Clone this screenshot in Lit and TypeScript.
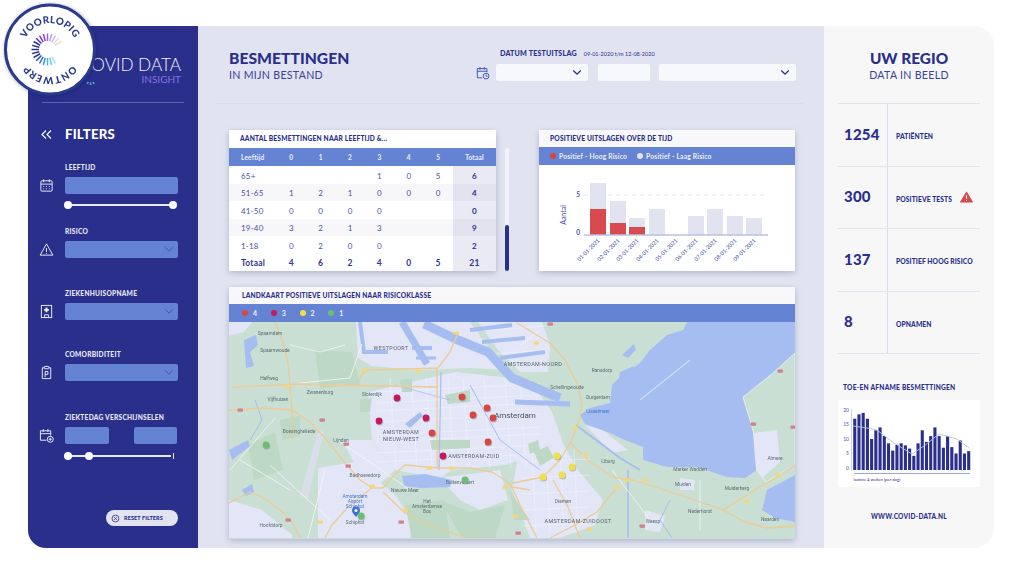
import { LitElement, css, html, svg } from 'lit';
import { customElement } from 'lit/decorators.js';

const ROWS = [
  ['65+', '', '', '', '1', '0', '5', '6'],
  ['51-65', '1', '2', '1', '0', '0', '0', '4'],
  ['41-50', '0', '0', '0', '0', '', '', '0'],
  ['19-40', '3', '2', '1', '3', '', '', '9'],
  ['1-18', '0', '2', '0', '0', '', '', '2'],
  ['Totaal', '4', '6', '2', '4', '0', '5', '21'],
];

// label, x, top of the grey bar, top of the red bar (page pixels)
const BARS: [string, number, number, number][] = [
  ['01-01-2021', 590, 183, 209],
  ['02-01-2021', 610, 201, 223],
  ['03-01-2021', 629, 218, 227],
  ['04-01-2021', 649, 209, 235],
  ['05-01-2021', 668, 235, 235],
  ['06-01-2021', 688, 216, 235],
  ['07-01-2021', 707, 209, 235],
  ['08-01-2021', 727, 216, 235],
  ['09-01-2021', 746, 218, 235],
];

const DAILY = [17, 18.5, 19, 17, 10, 13, 14, 11, 8.5, 6, 8, 8.5, 7.8, 6.7, 4.2, 8.5, 13, 9, 11, 14, 11, 7, 11, 7.2, 5, 9.5, 5, 5.8];
const TREND = '853,425 867,427 877,429 894,442 912,453 924,445 939,433 957,438 969,447';

const WATER_POLYS = [
  '687,322 795,322 795,353 772,374 743,397 750,420 757,445 757,470 745,478 727,477 697,467 667,467 643,460 643,447 625,440 610,433 585,424 580,415 590,408 610,403 612,385 620,377 640,363 650,350 667,335 683,330',
  '767,490 795,475 795,522 775,518 762,510',
  '402,476 425,474 452,480 450,487 420,488 404,486',
  '405,424 420,412 423,416 410,428',
  '244,340 256,335 258,345 250,352 254,366 246,368',
  '229,450 248,440 250,446 232,460',
  '242,490 252,484 254,492 246,496',
  '622,355 634,344 636,350 628,358',
  '620,372 634,366 630,380 618,384',
];

const WATER_LINES: [string, number][] = [
  ['360,322 364,352 388,352', 4],
  ['402,322 427,364', 7],
  ['412,348 432,348', 4],
  ['416,358 436,358', 3],
  ['424,324 458,340 488,352 512,378 560,398', 9],
  ['470,330 512,325', 4],
  ['482,342 525,338', 4],
  ['500,358 545,352', 4],
  ['515,402 570,404', 5],
  ['576,425 620,458 640,470', 2],
  ['628,470 628,538', 1.5],
  ['670,500 660,520 672,538', 1],
  ['441,372 439,470', 1.2],
  ['470,385 500,440 540,470', 1],
  ['395,385 450,400', 0.8],
  ['255,400 262,420 250,440', 1],
];

const URBAN_POLYS = [
  '356,322 470,322 490,350 508,370 470,368 420,370 372,366 358,358',
  '478,322 542,322 550,345 548,372 520,372 498,350',
  '368,392 455,372 530,380 552,412 562,440 545,452 505,465 452,470 440,478 395,470 372,440',
  '520,445 560,438 578,470 603,500 595,525 560,538 530,538 512,490',
  '318,468 355,462 395,495 412,520 410,538 318,538',
  '342,440 372,440 395,470 380,484 358,470',
  '229,500 262,510 292,535 292,538 229,538',
  '585,425 600,428 628,450 612,453',
  '680,478 695,480 694,490 680,490',
  '645,510 665,516 660,532 645,530',
  '440,478 500,470 508,500 480,510 460,500',
  '229,322 252,322 244,332 229,336',
];

const GREEN_POLYS = [
  '315,350 352,352 360,385 320,388',
  '405,505 445,500 450,538 412,538',
  '400,380 412,378 412,392 402,392',
  '534,452 548,446 554,458 540,466',
  '445,395 470,390 470,402 448,404',
  '430,440 470,440 470,448 432,450',
  '280,420 300,416 300,436 282,440',
  '510,490 516,500 530,520 514,520',
  '248,445 275,432 283,470 254,480',
  '528,444 538,440 540,450 530,454',
  '360,400 372,398 370,412 360,412',
  '440,500 470,512 505,505 495,538 462,538',
];

const ROADS = [
  '229,410 262,408 292,410 310,422 325,438 345,463 360,480 372,488 383,488 395,474 405,465 438,468 470,468 492,472 505,480 512,487 530,490',
  '232,387 300,384 380,386 438,387',
  '358,382 362,374 368,370 438,368 450,352 458,333',
  '437,368 437,468',
  '372,488 350,505 332,525 325,538',
  '383,492 405,513 430,525 465,538',
  '275,322 284,345 288,363 292,410 292,440',
  '513,483 543,477 560,460 570,443 578,425 582,405 578,385 565,360 550,343 517,323',
  '570,443 590,462 613,477 633,480 680,495 723,510 755,490 780,475 795,465',
  '723,510 745,522 767,528 795,526',
  '615,490 597,512 575,525 550,538',
  '553,480 568,507 580,538',
  '510,483 520,505 537,538',
  '229,503 250,492 262,497 280,510 292,522 300,538',
];

const STREETS = [
  '300,383 350,378 362,344',
  '230,470 275,418',
  '270,465 330,520',
  '338,440 410,490',
  '240,460 290,490',
  '520,345 540,330',
  '757,445 778,452',
  '290,345 320,352 345,345',
  '325,470 308,538',
  '640,400 690,360',
  '612,470 650,520',
  '700,480 700,530',
];

// a loose street grid for the built-up parts
const CITY_GRID: string[] = [
  ...[388, 399, 407, 418, 431, 438, 449, 458].map((y) => `376,${y + 4} 540,${y - 4}`),
  ...[390, 411, 426, 448, 463, 484, 505, 520].map((x) => `${x},378 ${x + 6},468`),
  ...[462, 478, 494, 510, 526].map((y) => `522,${y} 590,${y - 3}`),
  ...[532, 546, 560, 574].map((x) => `${x},450 ${x + 4},532`),
  ...[330, 342, 354].map((y) => `492,${y} 546,${y - 4}`),
];

const SHIELDS: [number, number, boolean][] = [
  [456, 333, false], [364, 370, false], [418, 371, false], [287, 386, false],
  [240, 410, true], [322, 420, true], [346, 444, true], [348, 466, true],
  [372, 486, false], [405, 510, false], [401, 522, true], [320, 522, false],
  [288, 520, true], [429, 468, false], [451, 468, false], [505, 487, false],
  [536, 343, false], [550, 324, true], [575, 428, false], [585, 455, false],
  [617, 487, false], [627, 480, false], [645, 480, false], [746, 501, false],
  [778, 475, false], [780, 371, true], [753, 424, true], [793, 427, true],
  [589, 529, false], [515, 516, false], [518, 533, true], [642, 526, true],
];

const LABELS: [number, number, string, string?][] = [
  [391, 350, 'WESTPOORT', 'l-area'],
  [270, 335, 'Spaarndam'],
  [275, 352, 'Spaarnwoude'],
  [269, 380, 'Halfweg'],
  [320, 394, 'Zwanenburg'],
  [278, 401, 'Vijfhuizen'],
  [372, 396, 'Sloterdijk'],
  [401, 434, 'AMSTERDAM', 'l-area'],
  [401, 441, 'NIEUW-WEST', 'l-area'],
  [474, 458, 'AMSTERDAM-ZUID', 'l-area'],
  [341, 442, 'Lijnden'],
  [299, 433, 'Boesingheliede'],
  [365, 477, 'Badhoevedorp'],
  [355, 498, 'Amsterdam', 'l-blue'],
  [355, 503, 'Airport', 'l-blue'],
  [355, 508, 'Schiphol', 'l-blue'],
  [355, 524, 'Schiphol'],
  [271, 527, 'Hoofddorp'],
  [405, 492, 'Nieuwe Meer'],
  [460, 484, 'Buitenveldert'],
  [427, 503, 'Het'],
  [427, 508, 'Amsterdamse'],
  [427, 513, 'Bos'],
  [533, 366, 'AMSTERDAM-NOORD', 'l-area'],
  [602, 372, 'Ransdorp'],
  [567, 389, 'Schellingwoude'],
  [598, 399, 'Durgerdam'],
  [598, 413, 'IJsselmeer', 'l-blue'],
  [515, 418, 'Amsterdam', 'l-city'],
  [563, 503, 'Diemen'],
  [578, 523, 'AMSTERDAM-ZUIDOOST', 'l-area'],
  [683, 486, 'Muiden'],
  [737, 490, 'Muiderberg'],
  [653, 523, 'Weesp'],
  [690, 471, 'Marker Wadden'],
  [608, 463, 'IJburg'],
  [775, 460, 'Almere'],
  [700, 513, 'Nederhorst'],
  [770, 521, 'Naarden'],
];

const MARKERS: [number, number, string][] = [
  [397, 398, 'm3'], [462, 397, 'm4'], [487, 408, 'm4'], [379, 421, 'm3'], [426, 418, 'm3'],
  [473, 415, 'm4'], [493, 418, 'm4'], [432, 433, 'm4'], [488, 442, 'm4'], [443, 456, 'm3'],
  [465, 480, 'm1'], [266, 445, 'm1'], [361, 516, 'm1'], [557, 456, 'm2'], [572, 467, 'm2'],
  [562, 475, 'm2'], [543, 477, 'm2'],
];

// clockwise from just right of the top
const RAY_COLORS = ['#b7a2ec', '#c9b6ee', '#e8dcd6', '#eeddc8', '#fff', '#fff', '#fff', '#fff', '#fff', '#9be8f2', '#5fd3ee', '#45b8e8', '#3d94dc', '#3b6fce', '#3450b4', '#2c3a9a', '#2a2f8c', '#2a2f8c', '#2a2f8c', '#3a2fa0', '#5a32c0', '#7a38d8', '#9440e0', '#a55ae4'];

const calendar = html`<svg class="ico" viewBox="0 0 16 16"><rect x="2" y="3" width="12" height="11" rx="1"/><path d="M2 6.5h12M5 1.5v3M11 1.5v3M4.5 9h1M7.5 9h1M10.5 9h1M4.5 11.5h1M7.5 11.5h1M10.5 11.5h1"/></svg>`;
const warning = html`<svg class="ico" viewBox="0 0 16 16"><path d="M8 2 14.8 14H1.2Z" stroke-linejoin="round"/><path d="M8 6.5v4M8 11.8v.8"/></svg>`;
const hospital = html`<svg class="ico" viewBox="0 0 16 16"><rect x="2.5" y="1.5" width="11" height="13"/><path d="M8 3.8v5M5.5 6.3h5" stroke-width="2"/><path d="M6 14.5v-3h4v3"/></svg>`;
const clipboard = html`<svg class="ico" viewBox="0 0 16 16"><path d="M5.5 3H3.5v11.5h9V3h-2"/><rect x="5.5" y="1.5" width="5" height="2.5" rx=".5"/><path d="M6.5 13V7h3v3h-3"/></svg>`;
const calendarPlus = html`<svg class="ico" viewBox="0 0 16 16"><path d="M8 13H1.5V3h11v5M1.5 6h11M4.5 1.2v3M9.5 1.2v3"/><circle cx="12" cy="12" r="3.2"/><path d="M12 10.4v3.2M10.4 12h3.2"/></svg>`;
const chevron = html`<svg class="chev" viewBox="0 0 12 8"><path d="M1.5 1.5 6 6l4.5-4.5"/></svg>`;

@customElement('app-root')
export class AppRoot extends LitElement {
  private renderStamp() {
    return html`<svg class="stamp" viewBox="0 0 100 100">
      <defs><path id="ring" d="M23 50A27 27 0 1 1 77 50A27 27 0 1 1 23 50"/></defs>
      <circle cx="50" cy="49.5" r="44.5" fill="#fff" stroke="#2a3a8c" stroke-width="3"/>
      ${RAY_COLORS.map((c, i) => {
        const a = ((i * 15 - 75) * Math.PI) / 180;
        return svg`<line x1=${47.5 + 8.5 * Math.cos(a)} y1=${49.5 + 8.5 * Math.sin(a)} x2=${47.5 + 16 * Math.cos(a)} y2=${49.5 + 16 * Math.sin(a)} stroke=${c} stroke-width="1.5"/>`;
      })}
      <text class="stamp-text"><textPath href="#ring" startOffset="25%">VOORLOPIG</textPath></text>
      <text class="stamp-text"><textPath href="#ring" startOffset="75%">ONTWERP</textPath></text>
    </svg>`;
  }

  private renderSidebar() {
    return html`<aside class="sidebar">
      <div class="logo">
        <svg class="logo-mark" viewBox="0 0 12 12"><path d="M2 9.5 3.500 8M5.500 11V8.500M9 10 8 8" stroke="#4db4e6" stroke-width="1.500"/></svg>
        <div class="logo-name">COVID DATA</div>
        <div class="logo-sub">INSIGHT</div>
      </div>
      <div class="filters-head">
        <svg class="collapse" viewBox="0 0 11 9"><path d="M5 .5 1 4.500 5 8.500M10 .5 6 4.500 10 8.500"/></svg>
        <span>FILTERS</span>
      </div>

      <div class="group g-age">
        <div class="label">LEEFTIJD</div>
        ${calendar}
        <div class="field"></div>
        <div class="slider"><i class="knob"></i><i class="knob"></i></div>
      </div>
      <div class="group g-risk">
        <div class="label">RISICO</div>
        ${warning}
        <div class="field select">${chevron}</div>
      </div>
      <div class="group g-next">
        <div class="label">ZIEKENHUISOPNAME</div>
        ${hospital}
        <div class="field select">${chevron}</div>
      </div>
      <div class="group g-next">
        <div class="label">COMORBIDITEIT</div>
        ${clipboard}
        <div class="field select">${chevron}</div>
      </div>
      <div class="group g-days">
        <div class="label">ZIEKTEDAG VERSCHIJNSELEN</div>
        ${calendarPlus}
        <div class="pair"><div class="field"></div><div class="field"></div></div>
        <div class="slider short"><i class="knob"></i><i class="knob"></i><i class="tick"></i></div>
      </div>
      <div class="reset-wrap">
        <div class="reset">
          <svg viewBox="0 0 10 10"><circle cx="5" cy="5" r="3.800"/><path d="M3.500 3.500l3 3M6.500 3.500l-3 3"/></svg>
          RESET FILTERS
        </div>
      </div>
    </aside>`;
  }

  private renderTable() {
    return html`<section class="card">
      <div class="card-title">AANTAL BESMETTINGEN NAAR LEEFTIJD &...</div>
      <table>
        <thead><tr>
          ${['Leeftijd', '0', '1', '2', '3', '4', '5', 'Totaal'].map((h) => html`<th>${h}</th>`)}
        </tr></thead>
        <tbody>
          ${ROWS.map((r) => html`<tr class=${r[0] === 'Totaal' ? 'total' : ''}>
            ${r.map((c) => html`<td>${c}</td>`)}
          </tr>`)}
        </tbody>
      </table>
    </section>`;
  }

  private renderBars() {
    return html`<svg class="bars" viewBox="539 165 256 106">
      <line class="grid" x1="584" y1="195" x2="768" y2="195"/>
      ${BARS.map(([d, x, top, red]) => svg`
        ${top < 235 ? svg`<rect x=${x} y=${top} width="16" height=${235 - top} fill="#e1e4f0"/>` : ''}
        ${red < 235 ? svg`<rect x=${x} y=${red} width="16" height=${235 - red} fill="#d94a4f"/>` : ''}
        <text class="tick-date" transform="translate(${x + 10} 241) rotate(-45)">${d}</text>
      `)}
      <line class="base" x1="584" y1="235" x2="768" y2="235"/>
      <text class="axis" x="580" y="197">5</text>
      <text class="axis" x="580" y="235">0</text>
      <text class="axis-name" transform="translate(566 215) rotate(-90)" text-anchor="middle">Aantal</text>
    </svg>`;
  }

  private renderMap() {
    return html`<svg class="map" viewBox="229 322 566 217" preserveAspectRatio="none">
      <rect x="229" y="322" width="566" height="217" fill="#c9dfd3"/>
      ${URBAN_POLYS.map((p) => svg`<polygon points=${p} fill="#e3e6f6"/>`)}
      ${CITY_GRID.map((p) => svg`<polyline points=${p} fill="none" stroke="#f4f5fd" stroke-width=".5"/>`)}
      ${GREEN_POLYS.map((p) => svg`<polygon points=${p} fill="#bed8c6"/>`)}
      <polygon points="318,430 324,432 308,498 300,496" fill="#d9deea"/>
      ${WATER_POLYS.map((p) => svg`<polygon points=${p} fill="#a6bdf2"/>`)}
      ${WATER_LINES.map(([p, w]) => svg`<polyline points=${p} fill="none" stroke="#a6bdf2" stroke-width=${w}/>`)}
      ${STREETS.map((p) => svg`<polyline points=${p} fill="none" stroke="#f4f7f5" stroke-width=".8"/>`)}
      <polygon points="795,353 772,374 743,397 750,420 757,445 757,470 766,482 795,465" fill="#c9dfd3" stroke="#eef3f0" stroke-width=".8"/>
      <polygon points="753,433 777,430 780,462 762,478 756,470" fill="#e3e6f6"/>
      ${ROADS.map((p) => svg`<polyline points=${p} fill="none" stroke="#eccb95" stroke-width="1.300" stroke-linejoin="round"/>`)}
      ${SHIELDS.map(([x, y, red]) => svg`<rect x=${x - 2.500} y=${y - 1.500} width="5.500" height="3.200" rx=".8" fill=${red ? '#d27f90' : '#f2d77c'}/>`)}
      ${LABELS.map(([x, y, t, c]) => svg`<text class="lbl ${c ?? ''}" x=${x} y=${y}>${t}</text>`)}
      <path d="M356 517c-3-3.500-4-5-4-6.500a4 4 0 0 1 8 0c0 1.500-1 3-4 6.500Z" fill="#3d6fd8"/>
      <circle cx="356" cy="510.500" r="1.500" fill="#fff"/>
      ${MARKERS.map(([x, y, c]) => svg`
        <circle cx=${x + 0.700} cy=${y + 1} r="3.600" fill="#5a6478" opacity=".35"/>
        <circle class=${c} cx=${x} cy=${y} r="3.400"/>
      `)}
    </svg>`;
  }

  private renderMini() {
    const y = (v: number) => 467 - v * 2.900;
    return html`<svg class="mini" viewBox="838 399 142 87">
      ${[20, 15, 10, 5, 0].map((v) => svg`<text class="mini-axis" x="849" y=${y(v) + 1.800}>${v}</text>`)}
      <line x1="851.500" y1="408" x2="851.500" y2="470" stroke="#b9c6ec" stroke-width=".8"/>
      ${DAILY.map((v, i) => svg`<rect x=${853.200 + i * 4.220} y=${y(v)} width="3.100" height=${469 - y(v)} fill="#2a2f8c"/>`)}
      <polyline points=${TREND} fill="none" stroke="#b5c4ee" stroke-width=".9"/>
      <line x1="854" y1="472.500" x2="970" y2="472.500" stroke="#97a6e0" stroke-width="1"/>
      <text class="mini-note" x="853.500" y="480">laatste 4 weken (per dag)</text>
    </svg>`;
  }

  render() {
    return html`
      <div class="page">
        ${this.renderStamp()}
        <div class="frame">
          ${this.renderSidebar()}
          <main class="main">
            <header class="main-head">
              <div class="titles">
                <h1>BESMETTINGEN</h1>
                <h2>IN MIJN BESTAND</h2>
              </div>
              <div class="dates">
                <div class="dates-label"><b>DATUM TESTUITSLAG</b><span>09-01-2020 t/m 12-08-2020</span></div>
                <div class="dates-row">
                  <svg class="ico dark" viewBox="0 0 16 16"><path d="M7 13.500H1.500V3h11v4M1.500 6h11M4.500 1.200v3M9.500 1.200v3"/><circle cx="11.500" cy="11.500" r="3.300"/><path d="M11.500 9.800v1.900h1.500"/></svg>
                  <div class="date-box w1">${chevron}</div>
                  <div class="date-box w2"></div>
                  <div class="date-box w3">${chevron}</div>
                </div>
              </div>
            </header>
            <div class="top-row">
              ${this.renderTable()}
              <div class="scroll"><i></i></div>
              <section class="card chart-card">
                <div class="card-title soft">POSITIEVE UITSLAGEN OVER DE TIJD</div>
                <div class="legend">
                  <span><i class="dot m4"></i>Positief - Hoog Risico</span>
                  <span><i class="dot light"></i>Positief - Laag Risico</span>
                </div>
                ${this.renderBars()}
              </section>
            </div>
            <section class="card map-card">
              <div class="card-title soft wide">LANDKAART POSITIEVE UITSLAGEN NAAR RISICOKLASSE</div>
              <div class="legend tight">
                <span><i class="dot m4"></i>4</span>
                <span><i class="dot m3"></i>3</span>
                <span><i class="dot m2"></i>2</span>
                <span><i class="dot m1"></i>1</span>
              </div>
              ${this.renderMap()}
            </section>
          </main>
          <aside class="region">
            <div class="region-head">
              <h1>UW REGIO</h1>
              <h2>DATA IN BEELD</h2>
            </div>
            <div class="stats">
              <div class="stat"><b>1254</b><span>PATIËNTEN</span></div>
              <div class="stat"><b>300</b><span>POSITIEVE TESTS
                <svg class="alert" viewBox="0 0 14 12"><path d="M7 .5 13.500 11.500H.5Z" fill="#d94a4f" stroke="#d94a4f" stroke-linejoin="round"/><path d="M7 4v4M7 9.300v1" stroke="#fff" stroke-width="1"/></svg>
              </span></div>
              <div class="stat"><b>137</b><span>POSITIEF HOOG RISICO</span></div>
              <div class="stat"><b>8</b><span>OPNAMEN</span></div>
            </div>
            <div class="mini-title">TOE-EN AFNAME BESMETTINGEN</div>
            ${this.renderMini()}
            <div class="site">WWW.COVID-DATA.NL</div>
          </aside>
        </div>
      </div>
    `;
  }

  static styles = css`
    :host {
      display: block;
      font-family: 'Lato', 'Noto Sans', sans-serif;
      color: #2a2f8c;
    }
    * { box-sizing: border-box; }

    .page {
      position: relative;
      width: 1024px;
      height: 575px;
      background: #fff;
      padding: 26px 30px 27px 28px;
      overflow: hidden;
    }
    .stamp {
      position: absolute;
      left: 0;
      top: 0;
      width: 100px;
      height: 100px;
      z-index: 2;
      filter: drop-shadow(1px 1px 2px rgba(20, 25, 90, 0.4));
    }
    .stamp-text {
      font-size: 9.800px;
      font-weight: 900;
      fill: #2a3a8c;
      text-anchor: middle;
      letter-spacing: 0.3px;
    }
    .frame {
      display: grid;
      grid-template-columns: 170px 626px 170px;
      height: 522px;
    }

    /* left filter column */
    .sidebar {
      background: #2a2f8c;
      border-radius: 0 0 0 18px;
      color: #fff;
      display: flex;
      flex-direction: column;
    }
    .logo {
      position: relative;
      height: 77px;
      margin: 0 14px;
      padding: 28px 3px 0 0;
      border-bottom: 1px solid #5c62ab;
      text-align: right;
    }
    .logo-name {
      font-weight: 300;
      font-size: 17.200px;
      line-height: 21px;
      color: #f2f3fb;
    }
    .logo-sub {
      font-size: 10px;
      line-height: 8px;
      color: #8b6fe4;
    }
    .logo-mark {
      position: absolute;
      left: 43px;
      top: 48px;
      width: 12px;
      height: 12px;
      fill: none;
    }
    .filters-head {
      display: grid;
      grid-template-columns: 37px 1fr;
      align-items: center;
      height: 20px;
      margin-top: 21px;
      font-weight: 900;
      font-size: 13.200px;
      letter-spacing: 0.2px;
    }
    .collapse {
      justify-self: center;
      width: 11px;
      height: 9px;
      fill: none;
      stroke: #f0f1fb;
      stroke-width: 1.300;
    }
    .group {
      display: grid;
      grid-template-columns: 37px 113px;
      grid-template-rows: 11px auto auto;
      row-gap: 4px;
      align-items: center;
    }
    .g-age { margin-top: 18px; }
    .g-risk { margin-top: 17px; }
    .g-next { margin-top: 25.500px; }
    .g-days { margin-top: 27px; }
    .label {
      grid-column: 2;
      font-size: 6.600px;
      font-weight: 900;
      letter-spacing: 0.25px;
      line-height: 11px;
      white-space: nowrap;
      color: #e6e8f8;
    }
    .ico {
      grid-column: 1;
      justify-self: center;
      width: 15px;
      height: 15px;
      fill: none;
      stroke: #f0f1fb;
      stroke-width: 1;
    }
    .ico.dark { stroke: #2f4aa6; width: 14px; height: 14px; grid-column: auto; }
    .field {
      grid-column: 2;
      height: 17px;
      background: #6483d3;
      border-radius: 2px;
    }
    .select {
      display: flex;
      align-items: center;
      justify-content: flex-end;
      padding-right: 4px;
    }
    .chev {
      width: 10px;
      height: 7px;
      fill: none;
      stroke: #3d55ad;
      stroke-width: 1.200;
    }
    .pair {
      grid-column: 2;
      display: flex;
      justify-content: space-between;
      padding-right: 1px;
    }
    .pair .field { width: 43.500px; }
    .slider {
      grid-column: 2;
      position: relative;
      display: flex;
      justify-content: space-between;
      align-items: center;
      height: 8px;
      margin: 3px 1px 0 -1px;
    }
    .slider::before {
      content: '';
      position: absolute;
      left: 3px;
      right: 3px;
      top: 3px;
      height: 2px;
      background: #e6e8f8;
    }
    .knob {
      position: relative;
      width: 8px;
      height: 8px;
      border-radius: 50%;
      background: #fff;
    }
    .short { justify-content: flex-start; gap: 13px; margin-right: 4px; margin-top: 4px; }
    .short .tick {
      position: absolute;
      right: 0;
      top: 1px;
      width: 1px;
      height: 6px;
      background: #e6e8f8;
    }
    .reset-wrap {
      margin-top: auto;
      padding: 0 20px 22px 0;
      display: flex;
      justify-content: flex-end;
    }
    .reset {
      display: flex;
      align-items: center;
      gap: 4px;
      width: 72px;
      height: 16px;
      padding-left: 5px;
      border-radius: 8px;
      background: #e1e4f0;
      color: #2a2f8c;
      font-size: 5.500px;
      font-weight: 900;
      letter-spacing: 0.1px;
      white-space: nowrap;
    }
    .reset svg {
      width: 9px;
      height: 9px;
      fill: none;
      stroke: #2a2f8c;
      stroke-width: 0.900;
    }

    /* centre column */
    .main {
      background: #e1e4f0;
      padding: 0 21px 0 19px;
      display: flex;
      flex-direction: column;
    }
    .main-head {
      height: 78px;
      border-bottom: 1px solid #d8dbe9;
      padding: 22px 7px 0 12px;
      display: flex;
      justify-content: space-between;
    }
    h1, h2 { margin: 0; }
    h1 {
      font-size: 15.700px;
      line-height: 20px;
      font-weight: 900;
    }
    h2 {
      font-size: 10.600px;
      line-height: 14px;
      font-weight: 400;
      letter-spacing: 0.3px;
      color: #3a4199;
    }
    .dates { width: 320px; flex: none; padding-top: 1px; }
    .dates-label {
      display: flex;
      align-items: baseline;
      gap: 7px;
      margin: 0 0 0 24px;
      height: 15px;
      white-space: nowrap;
    }
    .dates-label b { font-size: 7.100px; font-weight: 900; letter-spacing: 0.2px; }
    .dates-label span { font-size: 5.500px; }
    .dates-row { display: flex; align-items: center; }
    .dates-row .ico { margin-right: 6px; flex: none; }
    .date-box {
      height: 17px;
      flex: none;
      background: #f7f8fb;
      border-radius: 2px;
      display: flex;
      align-items: center;
      justify-content: flex-end;
      padding-right: 6px;
    }
    .date-box .chev { stroke: #2a2f8c; stroke-width: 1.600; }
    .w1 { width: 92px; margin-right: 10px; }
    .w2 { width: 52px; margin-right: 9px; }
    .w3 { width: 137px; }

    .top-row {
      margin: 26px 8px 0 12px;
      display: grid;
      grid-template-columns: 267px 43px 256px;
      height: 141px;
    }
    .card {
      background: #fff;
      box-shadow: 0 2px 6px rgba(50, 60, 120, 0.28);
    }
    .card-title {
      height: 17px;
      padding-left: 11px;
      font-size: 6.650px;
      line-height: 17px;
      font-weight: 900;
      letter-spacing: 0.18px;
      white-space: nowrap;
    }
    .card-title.soft { background: #f8f8fa; }
    .card-title.wide { padding-left: 13px; }
    table {
      width: 267px;
      margin-top: 1px;
      table-layout: fixed;
      border-collapse: collapse;
      font-size: 8px;
      color: #4b51a3;
    }
    th, td {
      padding: 0;
      height: 17.500px;
      text-align: center;
      width: 29.300px;
      letter-spacing: 0.2px;
    }
    td { padding-top: 2px; }
    th:first-child, td:first-child {
      width: 47.500px;
      text-align: left;
      padding-left: 12px;
    }
    th:last-child, td:last-child {
      width: 43px;
      background: #e9eaf3;
      font-weight: 700;
      color: #2a2f8c;
    }
    th, th:last-child {
      background: #6483d3;
      color: #f0f2fb;
      font-size: 6.500px;
      font-weight: 700;
      height: 18px;
    }
    tbody tr:nth-child(even) td { background: #f7f7fa; }
    tbody tr:nth-child(even) td:last-child { background: #e2e3ee; }
    tr.total td {
      font-weight: 700;
      color: #2f3592;
      font-size: 8.500px;
    }
    tbody tr.total td { background: #fff; }
    tbody tr.total td:last-child { background: #e9eaf3; }

    .scroll {
      width: 4px;
      height: 123px;
      margin: 18px 0 0 9px;
      border-radius: 2px;
      background: #f2f3f8;
      display: flex;
      align-items: flex-end;
    }
    .scroll i {
      display: block;
      width: 4px;
      height: 46px;
      border-radius: 2px;
      background: #2a2f8c;
    }
    .chart-card { display: flex; flex-direction: column; }
    .legend {
      height: 18px;
      background: #6483d3;
      display: flex;
      align-items: center;
      gap: 10px;
      padding-left: 11px;
      color: #eef0fb;
      font-size: 6.700px;
      font-weight: 700;
      letter-spacing: 0.2px;
      white-space: nowrap;
    }
    .legend span { display: flex; align-items: center; gap: 3px; }
    .dot {
      width: 6px;
      height: 6px;
      border-radius: 50%;
    }
    .dot.light { background: #e1e4f0; }
    .m4 { background: #d9453f; fill: #d9453f; }
    .m3 { background: #c21c5c; fill: #c21c5c; }
    .m2 { background: #f0de4a; fill: #f0de4a; }
    .m1 { background: #6bbf73; fill: #6bbf73; }
    .legend.tight { gap: 13.500px; padding-left: 13px; font-size: 7px; }
    .legend.tight span { gap: 5px; }

    .bars { width: 256px; height: 106px; display: block; }
    .grid { stroke: #e1e4f0; stroke-width: 1; stroke-dasharray: 4 4; }
    .base { stroke: #b9c0e0; stroke-width: 1.500; }
    .tick-date { font-size: 5.400px; fill: #4b51a3; text-anchor: end; }
    .axis { font-size: 6.500px; fill: #4b51a3; text-anchor: end; font-weight: 700; }
    .axis-name { font-size: 7px; fill: #4b51a3; }

    .map-card {
      margin: 16px 8px 0 12px;
      height: 252px;
      display: flex;
      flex-direction: column;
    }
    .map { display: block; width: 566px; height: 217px; filter: blur(0.3px); }
    .lbl { font-size: 4.800px; fill: #5b6b72; text-anchor: middle; font-family: 'Roboto', sans-serif; }
    .l-area { font-size: 5.400px; letter-spacing: 0.4px; fill: #56636f; }
    .l-blue { fill: #3f74d4; }
    .l-city { font-size: 8px; fill: #44505c; }

    /* right column */
    .region {
      background: #f7f7f8;
      border-radius: 0 20px 20px 0;
      padding: 0 14px;
      display: flex;
      flex-direction: column;
    }
    .region-head {
      height: 77px;
      padding-top: 22px;
      text-align: center;
    }
    .region-head h1 { font-size: 15.400px; }
    .stats { border-top: 1px solid #e0e2ee; }
    .stat {
      display: grid;
      grid-template-columns: 49px 1fr;
      height: 62.500px;
      border-bottom: 1px solid #e0e2ee;
    }
    .stat b {
      padding: 0 0 2px 6px;
      font-size: 15px;
      font-weight: 900;
      align-self: center;
      letter-spacing: 0.2px;
    }
    .stat span {
      border-left: 1px solid #d8dbe9;
      padding: 3px 0 0 8px;
      display: flex;
      align-items: center;
      gap: 8px;
      font-size: 6.700px;
      font-weight: 900;
      letter-spacing: 0.1px;
      white-space: nowrap;
    }
    .alert { width: 13px; height: 12px; margin-top: -3px; }
    .mini-title {
      margin: 28px 0 0 5px;
      font-size: 6.600px;
      line-height: 10px;
      font-weight: 900;
      letter-spacing: 0.25px;
      white-space: nowrap;
    }
    .mini { display: block; width: 142px; height: 87px; margin-top: 8px; background: #fff; }
    .mini-axis { font-size: 5px; fill: #4b51a3; text-anchor: end; }
    .mini-note { font-size: 4.300px; fill: #2a2f8c; }
    .site {
      margin-top: 26px;
      text-align: center;
      font-size: 6.500px;
      font-weight: 900;
      letter-spacing: 0.25px;
    }
  `;
}
